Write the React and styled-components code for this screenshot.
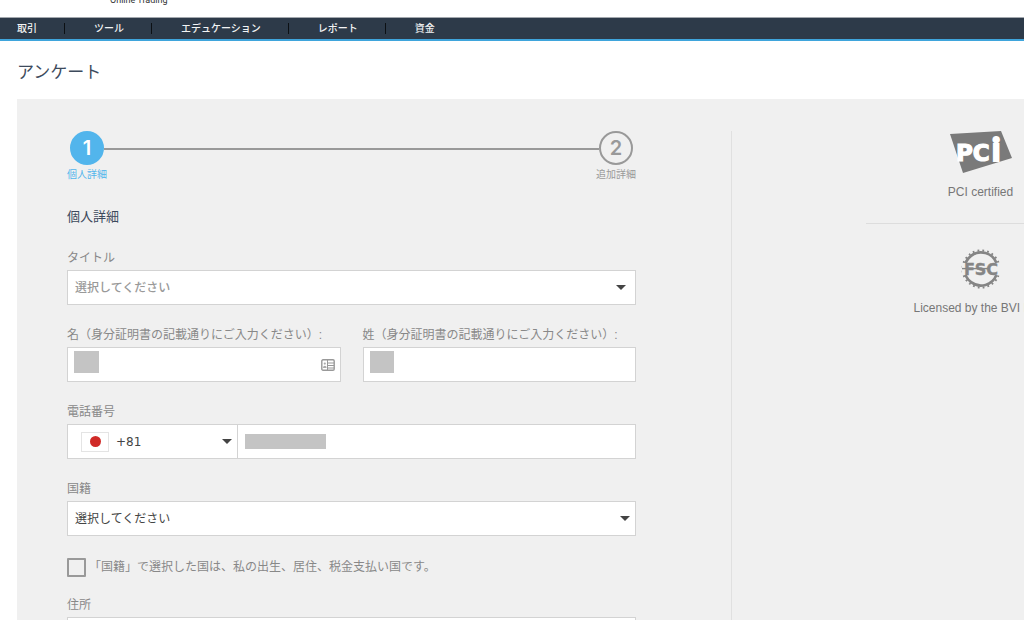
import React, { useState } from "react";
import styled, { createGlobalStyle } from "styled-components";

const GlobalStyle = createGlobalStyle`
  *, *::before, *::after {
    box-sizing: border-box;
  }
  html {
    overflow-x: hidden;
    scrollbar-width: none;
  }
  body {
    margin: 0;
    background: #fff;
    color: #888;
    font-family: "Liberation Sans", "Noto Sans CJK JP", sans-serif;
    font-size: 12px;
    line-height: 18px;
  }
  input, select {
    font: inherit;
  }
`;

const Page = styled.div`
  overflow: hidden;
`;

const Header = styled.header`
  display: flex;
  align-items: flex-end;
  height: 17px;
  padding: 0 0 11px 110px;
  overflow: hidden;
`;

const Tagline = styled.span`
  color: #333;
  font-family: Roboto, sans-serif;
  font-size: 9px;
  line-height: 12px;
`;

const Nav = styled.nav`
  display: flex;
  align-items: center;
  height: 24px;
  padding-left: 17px;
  border-top: 1px solid #a3a8ae;
  border-bottom: 2px solid #3fa5dc;
  background: #2d3a49;
`;

const NavLink = styled.a`
  padding: 1px 27px 0 0;
  color: #f2f3f4;
  font-size: 10px;
  font-weight: 500;
  line-height: 10px;
  text-decoration: none;
  white-space: nowrap;

  & + & {
    padding-left: 29px;
    border-left: 1px solid #0c1014;
  }
`;

const Title = styled.h1`
  margin: 20px 17px 14px;
  color: #3d4a5c;
  font-size: 17px;
  font-weight: 400;
  line-height: 24px;
`;

const Panel = styled.main`
  display: grid;
  grid-template-columns: 1fr 229px;
  column-gap: 134px;
  min-width: 1128px;
  margin-left: 17px;
  padding: 32px 50px;
  background: #f0f0f0;
`;

const Form = styled.form`
  padding-right: 95px;
  border-right: 1px solid #e0e0e0;
`;

const Steps = styled.ol`
  display: flex;
  margin: 0;
  padding: 0;
  list-style: none;
`;

const Step = styled.li`
  display: flex;
  flex-direction: column;
  align-items: center;
  gap: 2px;
  color: ${({ $active }) => ($active ? "#52b5ec" : "#999")};
  font-size: 10px;
  line-height: 16px;
`;

const Circle = styled.span`
  display: flex;
  align-items: center;
  justify-content: center;
  width: 34px;
  height: 34px;
  border: 2px solid ${({ $active }) => ($active ? "#52b5ec" : "#999")};
  border-radius: 50%;
  background: ${({ $active }) => ($active ? "#52b5ec" : "transparent")};
  color: ${({ $active }) => ($active ? "#fff" : "#999")};
  font-family: Inter, sans-serif;
  font-size: 20px;
  font-weight: 600;
  line-height: 24px;
`;

const StepLine = styled.li`
  flex: 1;
  height: 2px;
  margin: 17px -3px 0;
  background: #999;
`;

const SectionTitle = styled.h2`
  margin: 24px 0 22px;
  color: #3d4a5c;
  font-size: 13px;
  font-weight: 400;
  line-height: 20px;
`;

const Field = styled.div`
  margin-bottom: 21px;
`;

const FieldRow = styled.div`
  display: grid;
  grid-template-columns: 1fr 1fr;
  column-gap: 22px;
`;

const Label = styled.label`
  display: block;
  margin-bottom: 3px;
  color: #888;
  white-space: nowrap;
`;

const Box = styled.div`
  display: flex;
  align-items: center;
  height: 35px;
  border: 1px solid #d3d3d3;
  background: #fff;
`;

const SelectWrap = styled.div`
  position: relative;
  flex: 1;
  height: 100%;

  &::after {
    content: "";
    position: absolute;
    top: 14px;
    right: ${({ $arrow }) => $arrow || 5}px;
    border: 5px solid transparent;
    border-top-color: #444;
    border-bottom: 0;
    pointer-events: none;
  }
`;

const Select = styled.select`
  width: 100%;
  height: 100%;
  padding: 0 24px 0 7px;
  border: 0;
  outline: 0;
  appearance: none;
  background: transparent;
  color: ${({ $muted }) => ($muted ? "#999" : "#444")};
  font-weight: ${({ $muted }) => ($muted ? 500 : 400)};
`;

const CodeBox = styled.div`
  display: flex;
  align-items: center;
  width: 170px;
  height: 100%;
  padding-left: 13px;
  border-right: 1px solid #d3d3d3;

  select {
    font-family: "DejaVu Sans", sans-serif;
  }
`;

const Flag = styled.span`
  display: flex;
  align-items: center;
  justify-content: center;
  width: 28px;
  height: 20px;
  border: 1px solid #e4e4e4;

  &::before {
    content: "";
    width: 11px;
    height: 11px;
    border-radius: 50%;
    background: #d02a27;
  }
`;

const Mask = styled.span`
  align-self: ${({ $top }) => ($top ? "flex-start" : "center")};
  width: ${({ $width }) => $width}px;
  height: ${({ $height }) => $height}px;
  margin-top: ${({ $top }) => ($top ? 3 : 0)}px;
  margin-left: ${({ $left }) => $left || 6}px;
  background: #c4c4c4;
`;

const Input = styled.input`
  flex: 1;
  min-width: 0;
  height: 100%;
  padding: 0 7px;
  border: 0;
  outline: 0;
  background: transparent;
  color: #444;
`;

const CardIcon = styled.svg`
  width: 14px;
  height: 12px;
  margin-right: 5px;
`;

const CheckRow = styled.div`
  display: flex;
  align-items: center;
  gap: 3px;
  height: 20px;
  margin-bottom: 19px;

  label {
    margin: 0;
  }
`;

const Checkbox = styled.input`
  width: 19px;
  height: 19px;
  margin: 0;
  border: 2px solid #999;
  border-radius: 1px;
  appearance: none;

  &:checked {
    background: #52b5ec;
  }
`;

const Sidebar = styled.aside`
  color: #777;
`;

const Badge = styled.div`
  display: flex;
  flex-direction: column;
  align-items: center;
  gap: 8px;
  padding-bottom: 22px;

  & + & {
    padding-top: 23px;
    border-top: 1px solid #ddd;
  }
`;

const menu = ["取引", "ツール", "エデュケーション", "レポート", "資金"];

const PciLogo = () => (
  <svg width="64" height="44" viewBox="0 0 64 44" aria-hidden="true">
    <polygon points="1,3 52,0 63,27 14,42" fill="#7a7a7a" />
    <g fill="#fff" stroke="#fff" fontWeight="700">
      <text
        x="7"
        y="30"
        fontFamily="DejaVu Sans"
        fontSize="23"
        strokeWidth="1.2"
      >
        PC
      </text>
      <text
        x="43"
        y="30"
        fontFamily="Lato"
        fontWeight="900"
        fontSize="32"
        strokeWidth="2"
      >
        i
      </text>
    </g>
  </svg>
);

const FscLogo = () => (
  <svg width="44" height="44" viewBox="0 1 44 44" aria-hidden="true">
    <g fill="none" stroke="#858585">
      <path d="M37.4 17A16.5 16.5 0 1 0 37.4 29" strokeWidth="2.6" />
      <path
        d="M39.4 16.5A18.5 18.5 0 1 0 39.4 29.5"
        strokeWidth="2"
        strokeDasharray="1.8 3"
      />
    </g>
    <path d="M3 23H38" stroke="#f0f0f0" strokeWidth="12" />
    <text
      x="22"
      y="28.5"
      fill="#858585"
      stroke="#858585"
      strokeWidth="0.4"
      fontFamily="DejaVu Sans"
      fontWeight="700"
      fontSize="16"
      textAnchor="middle"
    >
      FSC
    </text>
    <path d="M3 22.6H30" stroke="#858585" strokeWidth="1.4" />
  </svg>
);

const App = () => {
  const [isSameCountry, setIsSameCountry] = useState(false);

  return (
    <>
      <GlobalStyle />
      <Page>
        <Header>
          <Tagline>Online Trading</Tagline>
        </Header>
        <Nav>
          {menu.map((item) => (
            <NavLink key={item} href="#">
              {item}
            </NavLink>
          ))}
        </Nav>
        <Title>アンケート</Title>

        <Panel>
          <Form>
            <Steps>
              <Step $active>
                <Circle $active>1</Circle>
                個人詳細
              </Step>
              <StepLine aria-hidden="true" />
              <Step>
                <Circle>2</Circle>
                追加詳細
              </Step>
            </Steps>

            <SectionTitle>個人詳細</SectionTitle>

            <Field>
              <Label htmlFor="title">タイトル</Label>
              <Box>
                <SelectWrap $arrow={9}>
                  <Select id="title" $muted>
                    <option>選択してください</option>
                  </Select>
                </SelectWrap>
              </Box>
            </Field>

            <FieldRow>
              <Field>
                <Label htmlFor="firstName">
                  名（身分証明書の記載通りにご入力ください）:
                </Label>
                <Box>
                  <Mask $width={25} $height={22} $top />
                  <Input id="firstName" type="text" />
                  <CardIcon viewBox="0 0 14 12" aria-hidden="true">
                    <rect
                      x="0.8"
                      y="0.8"
                      width="12.4"
                      height="10.4"
                      rx="1.2"
                      fill="#fff"
                      stroke="#999"
                      strokeWidth="1.4"
                    />
                    <path
                      d="M6.5 1V11M6.5 4H13M6.5 6.5H13M6.5 9H13"
                      stroke="#999"
                      strokeWidth="1"
                    />
                    <circle cx="3.8" cy="4.6" r="1.1" fill="#aaa" />
                    <path d="M2 9C2 6 5.6 6 5.6 9Z" fill="#aaa" />
                  </CardIcon>
                </Box>
              </Field>
              <Field>
                <Label htmlFor="lastName">
                  姓（身分証明書の記載通りにご入力ください）:
                </Label>
                <Box>
                  <Mask $width={24} $height={22} $top />
                  <Input id="lastName" type="text" />
                </Box>
              </Field>
            </FieldRow>

            <Field>
              <Label htmlFor="phone">電話番号</Label>
              <Box>
                <CodeBox>
                  <Flag />
                  <SelectWrap>
                    <Select aria-label="+81">
                      <option>+81</option>
                    </Select>
                  </SelectWrap>
                </CodeBox>
                <Mask $width={81} $height={15} $left={7} />
                <Input id="phone" type="tel" />
              </Box>
            </Field>

            <Field>
              <Label htmlFor="nationality">国籍</Label>
              <Box>
                <SelectWrap>
                  <Select id="nationality">
                    <option>選択してください</option>
                  </Select>
                </SelectWrap>
              </Box>
            </Field>

            <CheckRow>
              <Checkbox
                id="sameCountry"
                type="checkbox"
                checked={isSameCountry}
                onChange={() => setIsSameCountry(!isSameCountry)}
              />
              <Label htmlFor="sameCountry">
                「国籍」で選択した国は、私の出生、居住、税金支払い国です。
              </Label>
            </CheckRow>

            <Field>
              <Label htmlFor="address">住所</Label>
              <Box>
                <Input id="address" type="text" />
              </Box>
            </Field>
          </Form>

          <Sidebar>
            <Badge>
              <PciLogo />
              <span>PCI certified</span>
            </Badge>
            <Badge>
              <FscLogo />
              <span>Licensed by the BVI FSC</span>
            </Badge>
          </Sidebar>
        </Panel>
      </Page>
    </>
  );
};

export default App;
